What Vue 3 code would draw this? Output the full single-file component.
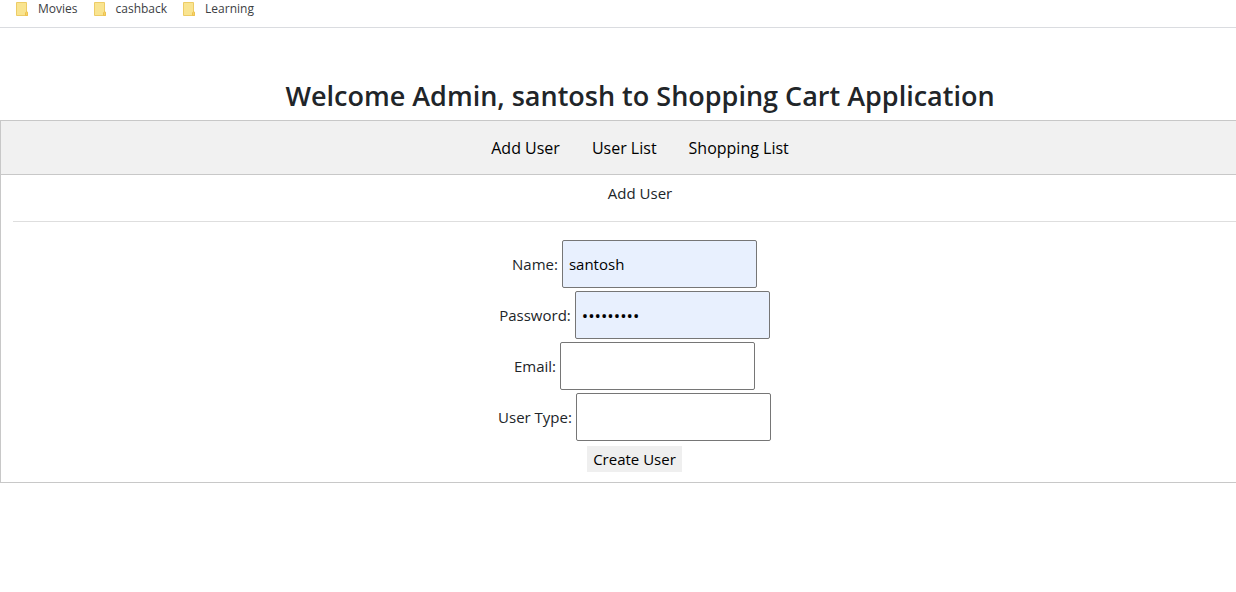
<script setup>
import { ref } from 'vue'

const bookmarks = ['Movies', 'cashback', 'Learning']
const links = ['Add User', 'User List', 'Shopping List']
const fields = ref([
  { id: 'name', label: 'Name:', type: 'text', value: 'santosh', filled: true },
  { id: 'password', label: 'Password:', type: 'password', value: 'santosh12', filled: true },
  { id: 'email', label: 'Email:', type: 'text', value: '', filled: false },
  { id: 'user-type', label: 'User Type:', type: 'text', value: '', filled: false }
])
</script>

<template>
  <div class="window">
    <nav class="bookmarks" aria-label="Bookmarks">
      <a v-for="b in bookmarks" :key="b" href="#" class="bookmark">
        <svg width="14" height="16" viewBox="0 0 14 16" aria-hidden="true">
          <path d="M1.5 1.5H11.5V10.5L12.5 11V14.5H1.5Z" fill="#f9e490" stroke="#edcc66" />
          <path d="M10.5 14.5V12L11.5 10.5L12.5 11.5V14.5Z" fill="#f5d36b" stroke="#eec24f" />
        </svg>
        <span>{{ b }}</span>
      </a>
    </nav>

    <main class="page">
      <h1>Welcome Admin, santosh to Shopping Cart Application</h1>
      <section class="card">
        <nav class="menu" aria-label="Main">
          <a v-for="l in links" :key="l" href="#">{{ l }}</a>
        </nav>
        <div class="body">
          <h2>Add User</h2>
          <hr />
          <form @submit.prevent>
            <div v-for="f in fields" :key="f.id" class="row">
              <label :for="f.id">{{ f.label }}</label>
              <input :id="f.id" v-model="f.value" :type="f.type" :class="{ filled: f.filled }" autocomplete="off" />
            </div>
            <button type="submit">Create User</button>
          </form>
        </div>
      </section>
    </main>
  </div>
</template>

<style>
body {
  margin: 0;
  background: #fff;
}
</style>

<style scoped>
* {
  box-sizing: border-box;
}
.window {
  min-height: 100vh;
  overflow: hidden;
  font-family: "Segoe UI", "Open Sans", "Noto Sans", sans-serif;
  font-size: 15px;
  line-height: 24px;
  color: #212529;
}
.bookmarks {
  display: flex;
  gap: 15px;
  height: 28px;
  padding-left: 15px;
  border-bottom: 1px solid #dadce0;
}
.bookmark {
  display: flex;
  align-items: center;
  gap: 9px;
  height: 18px;
  font-size: 12px;
  line-height: 18px;
  color: #3c4043;
  text-decoration: none;
}
.page {
  width: calc(100% + 44px);
  padding-top: 51px;
}
h1 {
  margin: 0 0 8px;
  text-align: center;
  font-size: 27px;
  line-height: 33px;
  font-weight: 600;
  white-space: nowrap;
}
.card {
  border: 1px solid #c8c8c8;
}
.menu {
  display: flex;
  justify-content: center;
  gap: 32px;
  padding: 15px 0 14px;
  background: #f1f1f1;
  border-bottom: 1px solid #c8c8c8;
  font-size: 16px;
}
.menu a {
  color: #000;
  text-decoration: none;
}
.body {
  padding: 6px 12px 10px;
}
h2 {
  margin: 0;
  text-align: center;
  font-size: 15px;
  line-height: 24px;
  font-weight: 400;
}
hr {
  margin: 16px 0 18px;
  border: 0;
  border-top: 1px solid #dedede;
}
form {
  display: flex;
  flex-direction: column;
  align-items: center;
  gap: 3px;
  padding-right: 11px;
}
.row {
  display: flex;
  align-items: center;
  gap: 4px;
}
input {
  width: 195px;
  height: 48px;
  padding: 0 6px;
  border: 1px solid #767676;
  border-radius: 2px;
  background: #fff;
  font: inherit;
  color: #000;
}
input[type="password"] {
  font-size: 17px;
}
input.filled {
  background: #e8f0fe;
}
button {
  height: 26px;
  margin-top: 2px;
  padding: 0 6px;
  border: 0;
  background: #efefef;
  font: inherit;
  color: #000;
}
</style>
